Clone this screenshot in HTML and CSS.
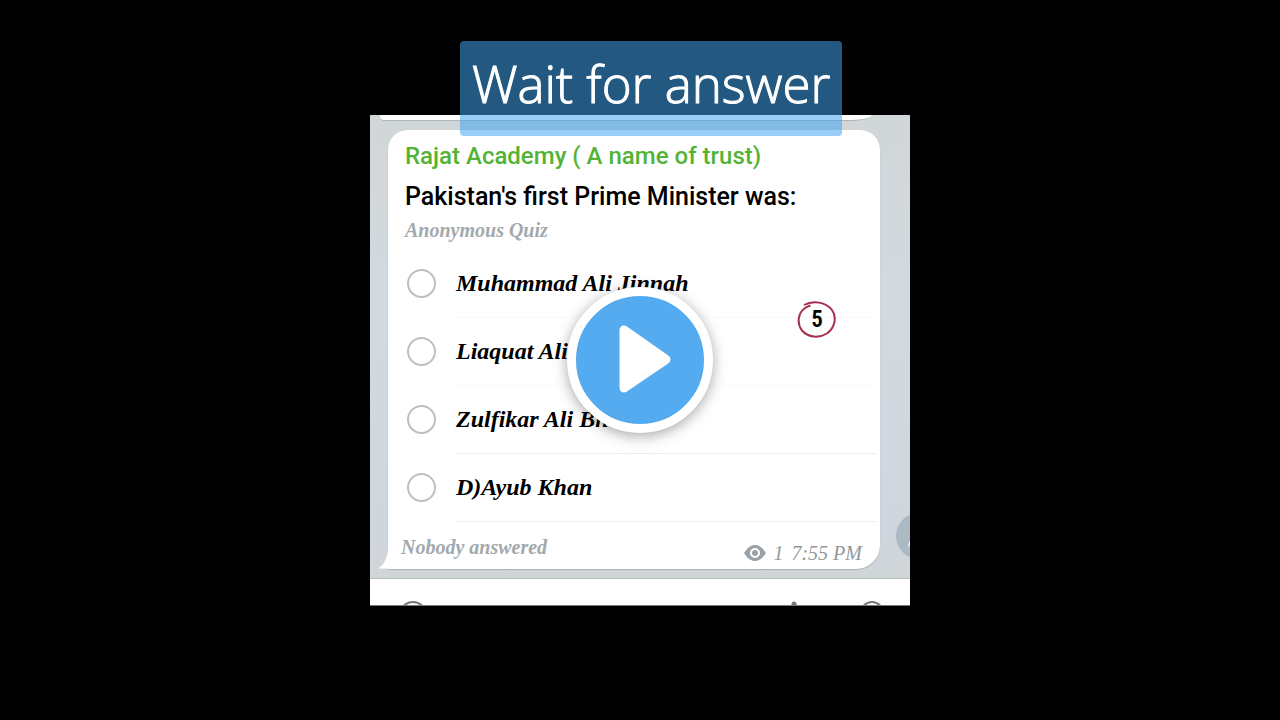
FILE: index.html
```html
<!DOCTYPE html>
<html lang="en">
<head>
  <meta charset="UTF-8" />
  <meta name="viewport" content="width=device-width, initial-scale=1.0" />
  <title>Rajat Academy Quiz</title>
  <link rel="stylesheet" href="styles.css">
</head>
<body>

<main class="player">
  <div class="chat">
    <div class="messages">
      <div class="previous"></div>

      <form class="bubble">
        <h1>Rajat Academy ( A name of trust)</h1>
        <fieldset>
          <legend>Pakistan's first Prime Minister was:</legend>
          <p class="kind">Anonymous Quiz</p>
          <label class="option faint"><input type="radio" name="answer"><span>Muhammad Ali Jinnah</span></label>
          <label class="option faint"><input type="radio" name="answer"><span>Liaquat Ali Khan</span></label>
          <label class="option"><input type="radio" name="answer"><span>Zulfikar Ali Bhutto</span></label>
          <label class="option"><input type="radio" name="answer"><span>D)Ayub Khan</span></label>
        </fieldset>
        <footer>
          <span class="votes">Nobody answered</span>
          <span class="meta">
            <svg width="22" height="16" viewBox="0 0 22 16">
              <path d="M0 8C4 2 7 0 11 0s7 2 11 8c-4 6-7 8-11 8S4 14 0 8z" fill="#9ba2a7"/>
              <circle cx="11" cy="8" r="4" fill="#9ba2a7" stroke="#fff" stroke-width="2"/>
            </svg>
            <span>1</span>
            <time>7:55 PM</time>
          </span>
        </footer>
        <svg class="tail" width="12" height="32" viewBox="0 0 12 32">
          <path d="M11 0v10c0 10-3 17-10 21.500h11V0z" fill="#fff"/>
        </svg>
      </form>

      <button class="share" type="button" aria-label="Share">
        <svg width="46" height="46" viewBox="0 0 46 46">
          <path d="M12 35c1-9 5-13 12-13v-7l10 10-10 10v-7c-5 0-9 1-12 7z" fill="#fff"/>
        </svg>
      </button>
    </div>

    <div class="compose">
      <svg width="30" height="30" viewBox="0 0 30 30"><circle cx="15" cy="15" r="13"/></svg>
      <svg class="bell" width="30" height="30" viewBox="0 0 30 30"><path d="M15 4v8" stroke-linecap="round"/></svg>
      <svg width="30" height="30" viewBox="0 0 30 30"><circle cx="15" cy="13" r="11"/></svg>
    </div>
  </div>

  <div class="caption">Wait for answer</div>

  <div class="timer">
    <svg width="40" height="40" viewBox="0 0 40 40">
      <path d="M7 5C16 0 29 2 35 10c5 7 3 18-5 23.500-8 5-19 4-25-3C-.5 23 1 13 8 8c2-1.500 4-2 5.500-2.500"/>
    </svg>
    <span>5</span>
  </div>

  <button class="play" type="button" aria-label="Play">
    <svg width="128" height="128" viewBox="0 0 128 128">
      <path d="M48 34v58l42-28.500z" fill="#fff" stroke="#fff" stroke-width="9" stroke-linejoin="round"/>
    </svg>
  </button>
</main>

</body>
</html>
```
FILE: styles.css
```css
* {
  box-sizing: border-box;
}

body {
  margin: 0;
  min-height: 100vh;
  display: flex;
  align-items: center;
  justify-content: center;
  background: #000;
  color: #000;
  font-family: Roboto, sans-serif;
}

button {
  padding: 0;
  border: none;
  cursor: pointer;
}

svg {
  display: block;
}

.player {
  position: relative;
  width: 100%;
  max-width: 540px;
}

.chat {
  overflow: hidden;
}

.messages {
  position: relative;
  padding: 0 30px 9px 18px;
  background: linear-gradient(#d1d6d8, #d2dae0 40%, #cfd6de 90%, #d0d5d7);
  border-bottom: 1px solid #b5babd;
}

.previous {
  height: 6px;
  margin: 0 8px 9px -8px;
  background: #fff;
  border-bottom: 1px solid #afb5b7;
  border-radius: 0 0 20px 4px / 0 0 6px 4px;
}

.bubble {
  position: relative;
  padding: 12px 4px 0 17px;
  background: #fff;
  border-radius: 20px 20px 24px 0;
  box-shadow: 0 1px 1px #aab1b4;
}

.bubble h1 {
  margin: 0;
  font-size: 24px;
  font-weight: 500;
  line-height: 28px;
  color: #53b336;
}

fieldset {
  margin: 0;
  padding: 0;
  border: none;
}

legend {
  padding: 13px 0 0;
  font-size: 25px;
  font-weight: 500;
  line-height: 28px;
}

.kind,
.option,
.bubble footer {
  font-family: "Liberation Serif", serif;
  font-style: italic;
  font-weight: bold;
}

.kind {
  margin: 7px 0 8px;
  font-size: 20px;
  line-height: 24px;
  color: #a2a9ad;
}

.option {
  display: flex;
  align-items: center;
  gap: 20px;
  height: 68px;
  padding-left: 2px;
  font-size: 24px;
}

.option span {
  flex: 1;
  line-height: 67px;
  border-bottom: 1px solid #eceeef;
}

.option.faint span {
  border-color: #f8f9f9;
}

.option input {
  appearance: none;
  width: 29px;
  height: 29px;
  margin: 0;
  border: 2px solid #bdc0c3;
  border-radius: 50%;
}

.option input:checked {
  background: #55abef;
}

.bubble footer {
  position: relative;
  display: flex;
  justify-content: space-between;
  align-items: flex-start;
  height: 47px;
  padding: 13px 14px 0 0;
  margin-left: -4px;
  font-size: 20px;
  line-height: 24px;
  color: #a2a9ad;
}

.meta {
  display: flex;
  align-items: center;
  gap: 7px;
  padding-top: 6px;
  font-weight: normal;
  color: #91979b;
}

.meta time {
  margin-left: 1px;
}

.tail {
  position: absolute;
  left: -11px;
  bottom: 0;
}

.share {
  position: absolute;
  right: -32px;
  bottom: 19px;
  width: 46px;
  height: 46px;
  border-radius: 50%;
  background: #abb9c3;
}

.compose {
  display: flex;
  height: 27px;
  padding: 21px 23px 0 28px;
  background: #fff;
  border-bottom: 1px solid #777;
}

.compose svg {
  flex: none;
  fill: none;
  stroke: #777a72;
  stroke-width: 2;
}

.compose .bell {
  margin-left: auto;
  margin-right: 48px;
  stroke-width: 5;
}

.caption {
  position: absolute;
  top: -74px;
  left: 90px;
  padding: 6px 12px 17px;
  border-radius: 4px;
  background: rgba(65, 163, 237, 0.54);
  color: #fff;
  font-family: "Open Sans", sans-serif;
  font-size: 51px;
  font-weight: 300;
  line-height: 72px;
  white-space: nowrap;
  -webkit-text-stroke: 1px #fff;
}

.timer {
  position: absolute;
  top: 185px;
  right: 73px;
  width: 40px;
  height: 40px;
  display: grid;
  place-items: center;
}

.timer > * {
  grid-area: 1 / 1;
}

.timer path {
  fill: none;
  stroke: #a52f4c;
  stroke-width: 2;
}

.timer span {
  font-family: "Roboto Condensed", Roboto, sans-serif;
  font-size: 23px;
  font-weight: 600;
}

.play {
  position: absolute;
  top: 50%;
  left: 50%;
  transform: translate(-50%, -50%);
  border: 9px solid #fff;
  border-radius: 50%;
  background: #55abef;
  box-shadow: 0 3px 14px rgba(0, 0, 0, 0.35);
}
```
